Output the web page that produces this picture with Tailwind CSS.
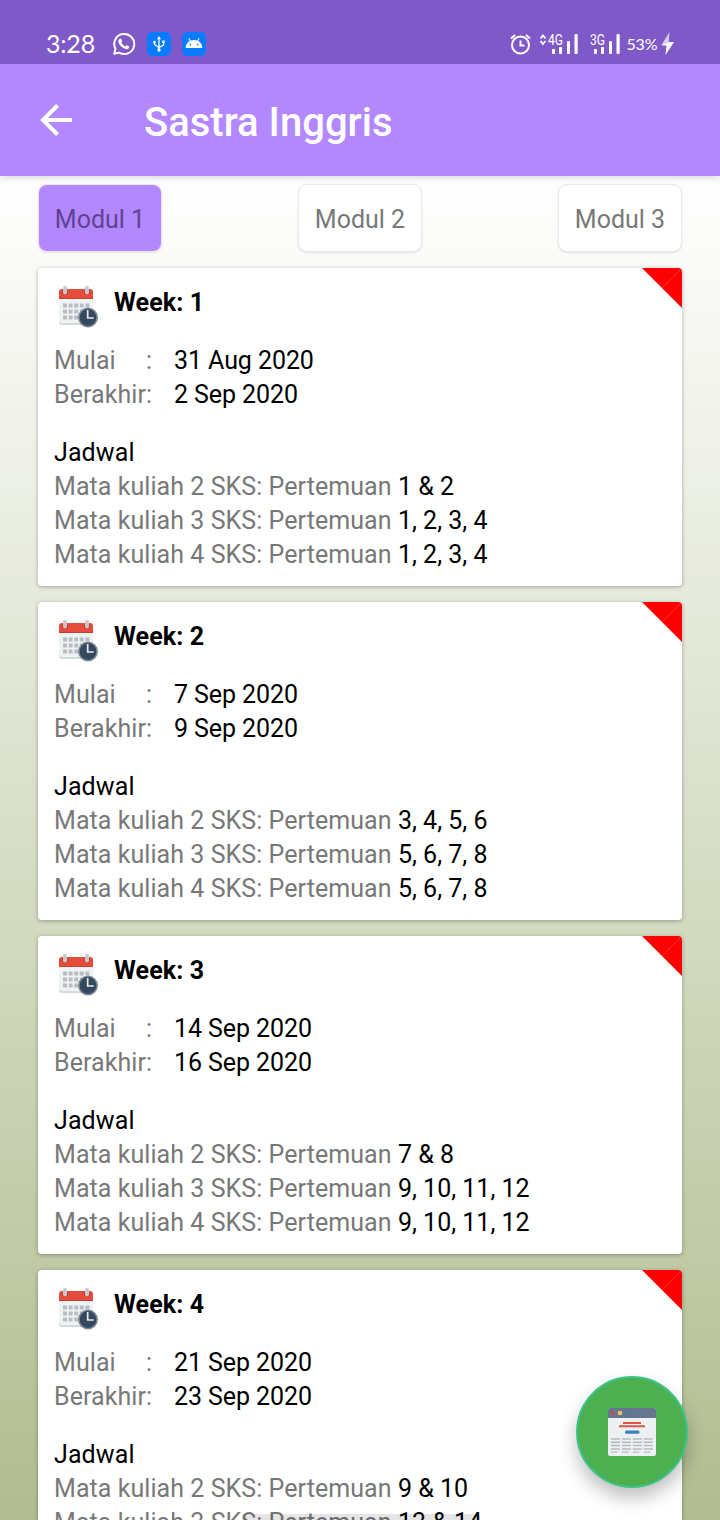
<!DOCTYPE html>
<html lang="id">
<head>
<meta charset="utf-8">
<title>Sastra Inggris</title>
<script src="https://cdn.jsdelivr.net/npm/@tailwindcss/browser@4"></script>
</head>
<body class="font-['Roboto',sans-serif]">
<div class="relative flex h-[1520px] w-[720px] flex-col overflow-hidden bg-white">
  <header class="z-10 flex shrink-0 flex-col shadow-[0_2px_7px_rgba(0,0,0,0.15)]">
    <div class="flex h-16 items-center bg-[#8059c8] pt-6 pr-[45px] pl-[46px] font-['Lato',sans-serif] text-white">
      <span class="w-[66px] pb-[3px] text-[25px] leading-9 tracking-[-0.2px]">3:28</span>
      <svg class="h-6 w-6" viewBox="0 0 24 24" fill="none" stroke="#fff" stroke-width="2"><path d="M2.2 21.8l1.3-5A10 10 0 1 1 7.2 20.6z" stroke-linejoin="round"/><path d="M7.2 7.2c1-1 1.8-.7 2.2.3l.7 1.6c.2.5-.8 1.3-.6 1.7.8 1.5 2 2.7 3.6 3.4.5.2 1.2-1.3 1.8-1l2 1c.7.4.3 2-1 2.7-3 1.3-8.6-3-9.5-6.8-.2-1.200.2-2.300.8-2.900z" fill="#fff" stroke="none"/></svg>
      <svg class="ml-[11px] h-6 w-6" viewBox="0 0 24 24"><rect width="24" height="24" rx="5" fill="#087bff"/><g stroke="#fff" stroke-width="1.300" fill="none"><path d="M12 6v12M7.500 10v2.500L12 15.500l4.500-2.500V10"/></g><path d="M12 4l2 3.200h-4z" fill="#fff"/><circle cx="12" cy="18" r="1.700" fill="#fff"/><circle cx="7.500" cy="10" r="1.300" fill="#fff"/><path d="M15.300 8.500h2.400v2.400h-2.400z" fill="#fff"/></svg>
      <svg class="ml-[11px] h-6 w-6" viewBox="0 0 24 24"><rect width="24" height="24" rx="5" fill="#087bff"/><path d="M3.500 16c.3-3.400 2-5.800 4.300-7L6.300 6.500l.8-.4 1.600 2.500a10 10 0 0 1 6.600 0l1.600-2.500.8.400L16.200 9c2.300 1.200 4 3.600 4.300 7z" fill="#fff"/><circle cx="8.300" cy="12.600" r=".9" fill="#087bff"/><circle cx="15.700" cy="12.600" r=".9" fill="#087bff"/></svg>
      <svg class="ml-auto h-[26px] w-[168px]" viewBox="0 0 168 26">
        <g fill="none" stroke="#fff" stroke-width="2"><circle cx="13.500" cy="14" r="8.500"/><path d="M13.500 9.500v5h4M4 7.500l4-3.500M23 7.500l-4-3.500"/></g>
        <path d="M33.500 7.500l2.500-3 2.500 3M33.500 10l2.500 3 2.500-3" fill="none" stroke="#fff" stroke-width="1.800"/>
        <g fill="#fff"><rect x="45" y="18" width="3" height="5" rx=".8"/><rect x="52" y="16" width="3" height="7" rx=".8"/><rect x="60" y="10" width="3" height="13" rx=".8"/><rect x="67.500" y="3" width="3.200" height="20" rx="1"/>
        <rect x="87" y="18" width="3" height="5" rx=".8"/><rect x="94" y="16" width="3" height="7" rx=".8"/><rect x="102" y="10" width="3" height="13" rx=".8"/><rect x="109.500" y="3" width="3.200" height="20" rx="1"/></g>
        <g fill="#fff" font-family="Roboto, sans-serif" font-size="14.500"><text x="41" y="14" textLength="15" lengthAdjust="spacingAndGlyphs">4G</text><text x="83" y="14" textLength="15" lengthAdjust="spacingAndGlyphs">3G</text></g>
        <text x="119.500" y="19" fill="#fff" font-family="Lato, sans-serif" font-size="16" textLength="31" lengthAdjust="spacing">53%</text>
        <path d="M162.500 1l-8 13h7z" fill="#fff" fill-opacity=".7"/><path d="M154.500 14.500l8-3.500h4.500l-8.500 13 1-9.500z" fill="#fff"/>
      </svg>
    </div>
    <div class="flex h-28 items-center bg-[#b388ff] pl-10 text-white">
      <svg class="h-8 w-8" viewBox="0 0 32 32" fill="none" stroke="#fff" stroke-width="4"><path d="M32 16H3M17.500 1.500L3 16l14.500 14.500"/></svg>
      <h1 class="ml-[72px] pt-1.5 text-[40px] leading-[48px] font-medium">Sastra Inggris</h1>
    </div>
  </header>
  <main class="flex flex-1 flex-col bg-linear-to-b from-white to-[#b1bd90] px-[38px] pt-2 text-[25px] leading-[34px] text-[#787878]">
    <nav class="flex shrink-0 justify-between">
      <div class="flex h-[68px] w-[124px] items-center justify-center rounded-[9px] border border-[#ece5f5] bg-[#b388ff] pt-1 text-[#5f4390] shadow-[0_1px_2px_rgba(0,0,0,0.1)]">Modul 1</div>
      <div class="flex h-[68px] w-[124px] items-center justify-center rounded-[9px] border border-[#e8e8e8] bg-white pt-1 shadow-[0_1px_2px_rgba(0,0,0,0.1)]">Modul 2</div>
      <div class="flex h-[68px] w-[124px] items-center justify-center rounded-[9px] border border-[#e8e8e8] bg-white pt-1 shadow-[0_1px_2px_rgba(0,0,0,0.1)]">Modul 3</div>
    </nav>
    <div id="weeks" class="mt-4 flex h-[1252px] shrink-0 flex-col gap-4"></div>
  </main>
  <div class="absolute top-[1514px] left-[242px] h-[6px] w-[238px] rounded-t bg-black/10"></div>
  <button class="absolute top-[1376px] left-[576px] flex h-28 w-28 items-center justify-center rounded-full border-2 border-[#3cc48c] bg-[#4caf50] shadow-[0_10px_18px_rgba(0,0,0,0.25)]" aria-label="Jadwal">
    <svg class="h-12 w-12" viewBox="0 0 48 48">
      <rect width="48" height="48" rx="2" fill="#ecf0f1"/><path d="M0 10V2Q0 0 2 0H46Q48 0 48 2V10z" fill="#68758f"/>
      <rect x="3" y="3" width="4" height="4" rx="2" fill="#b65350"/><rect x="10" y="3" width="4" height="4" rx="1" fill="#f3c15b"/><rect x="17" y="3" width="4" height="4" rx="2" fill="#4b8383"/>
      <path d="M15 15h18M11 18.300h26" stroke="#db5648" stroke-width="2"/><rect x="17" y="22.500" width="14.500" height="3.300" rx="1.600" fill="#3b7fbf"/>
      <path d="M3 31h42M3 34.300h42M3 37.600h42M3 41h42" stroke="#b5babd" stroke-width="1.500" stroke-dasharray="9 1.900"/><path d="M3 44.200h42" stroke="#b5babd" stroke-width="1.300" stroke-dasharray="6.500 4.400"/>
    </svg>
  </button>
</div>
<template id="week-card">
  <article class="relative flex h-[318px] shrink-0 flex-col overflow-hidden rounded bg-white px-4 shadow-[0_1px_4px_rgba(0,0,0,0.3)]">
    <svg class="absolute top-0 right-0 h-10 w-10" viewBox="0 0 40 40"><path d="M0 0h40v40z" fill="#f00"/><path d="M20 20L38 2" stroke="#ff5050" stroke-width=".6"/></svg>
    <div class="flex h-[76px] items-start">
      <svg class="mt-[17px] ml-1 h-[43px] w-10" viewBox="0 0 40 43">
        <path d="M1 13h34v24q0 3-3 3H4q-3 0-3-3z" fill="#d4d9db"/><path d="M1 13h34v22q0 3-3 3H4q-3 0-3-3z" fill="#f0f3f4"/>
        <path d="M1 14V7q0-3 3-3h28q3 0 3 3v7z" fill="#e64c3c"/><path d="M1 13.500h34" stroke="#c8402f"/>
        <circle cx="7" cy="7" r="2.800" fill="#b83a2e"/><circle cx="29" cy="7" r="2.800" fill="#b83a2e"/><rect x="5" y="1" width="4" height="8.500" rx="2" fill="#c6c9cb"/><rect x="27" y="1" width="4" height="8.500" rx="2" fill="#c6c9cb"/>
        <path d="M5 20.500h26.500M5 26.500h26.500M5 32.500h16" stroke="#b8bec2" stroke-width="4" stroke-dasharray="4 1.600"/>
        <circle cx="30" cy="32.500" r="9.200" fill="#34495e" stroke="#7e8b96" stroke-width="1.600"/><path d="M29.700 25v8h6" fill="none" stroke="#e8edf0" stroke-width="1.700"/>
      </svg>
      <h2 data-f="week" class="mt-[18px] ml-4 font-bold tracking-[0.12px] text-black"></h2>
    </div>
    <div class="flex"><span class="w-[92px] tracking-[0.07px]">Mulai</span><span class="w-7">:</span><span data-f="start" class="tracking-[-0.08px] text-black"></span></div>
    <div class="flex"><span class="w-[92px] tracking-[0.07px]">Berakhir</span><span class="w-7">:</span><span data-f="end" class="tracking-[-0.08px] text-black"></span></div>
    <p class="mt-6 tracking-[0.1px] text-black">Jadwal</p>
    <p class="whitespace-nowrap"><span class="tracking-[0.06px]">Mata kuliah 2 SKS: Pertemuan </span><span data-f="a" class="text-black"></span></p>
    <p class="whitespace-nowrap"><span class="tracking-[0.06px]">Mata kuliah 3 SKS: Pertemuan </span><span data-f="b" class="text-black"></span></p>
    <p class="whitespace-nowrap"><span class="tracking-[0.06px]">Mata kuliah 4 SKS: Pertemuan </span><span data-f="c" class="text-black"></span></p>
  </article>
</template>
<script>
  const weeks = [
    { week: 'Week: 1', start: '31 Aug 2020', end: '2 Sep 2020', a: '1 & 2', b: '1, 2, 3, 4', c: '1, 2, 3, 4' },
    { week: 'Week: 2', start: '7 Sep 2020', end: '9 Sep 2020', a: '3, 4, 5, 6', b: '5, 6, 7, 8', c: '5, 6, 7, 8' },
    { week: 'Week: 3', start: '14 Sep 2020', end: '16 Sep 2020', a: '7 & 8', b: '9, 10, 11, 12', c: '9, 10, 11, 12' },
    { week: 'Week: 4', start: '21 Sep 2020', end: '23 Sep 2020', a: '9 & 10', b: '13 & 14' }
  ];
  const tpl = document.getElementById('week-card');
  weeks.forEach(w => {
    const card = tpl.content.cloneNode(true);
    card.querySelectorAll('[data-f]').forEach(el => {
      if (w[el.dataset.f]) el.textContent = w[el.dataset.f];
      else el.parentElement.remove();
    });
    document.getElementById('weeks').append(card);
  });
</script>
</body>
</html>
